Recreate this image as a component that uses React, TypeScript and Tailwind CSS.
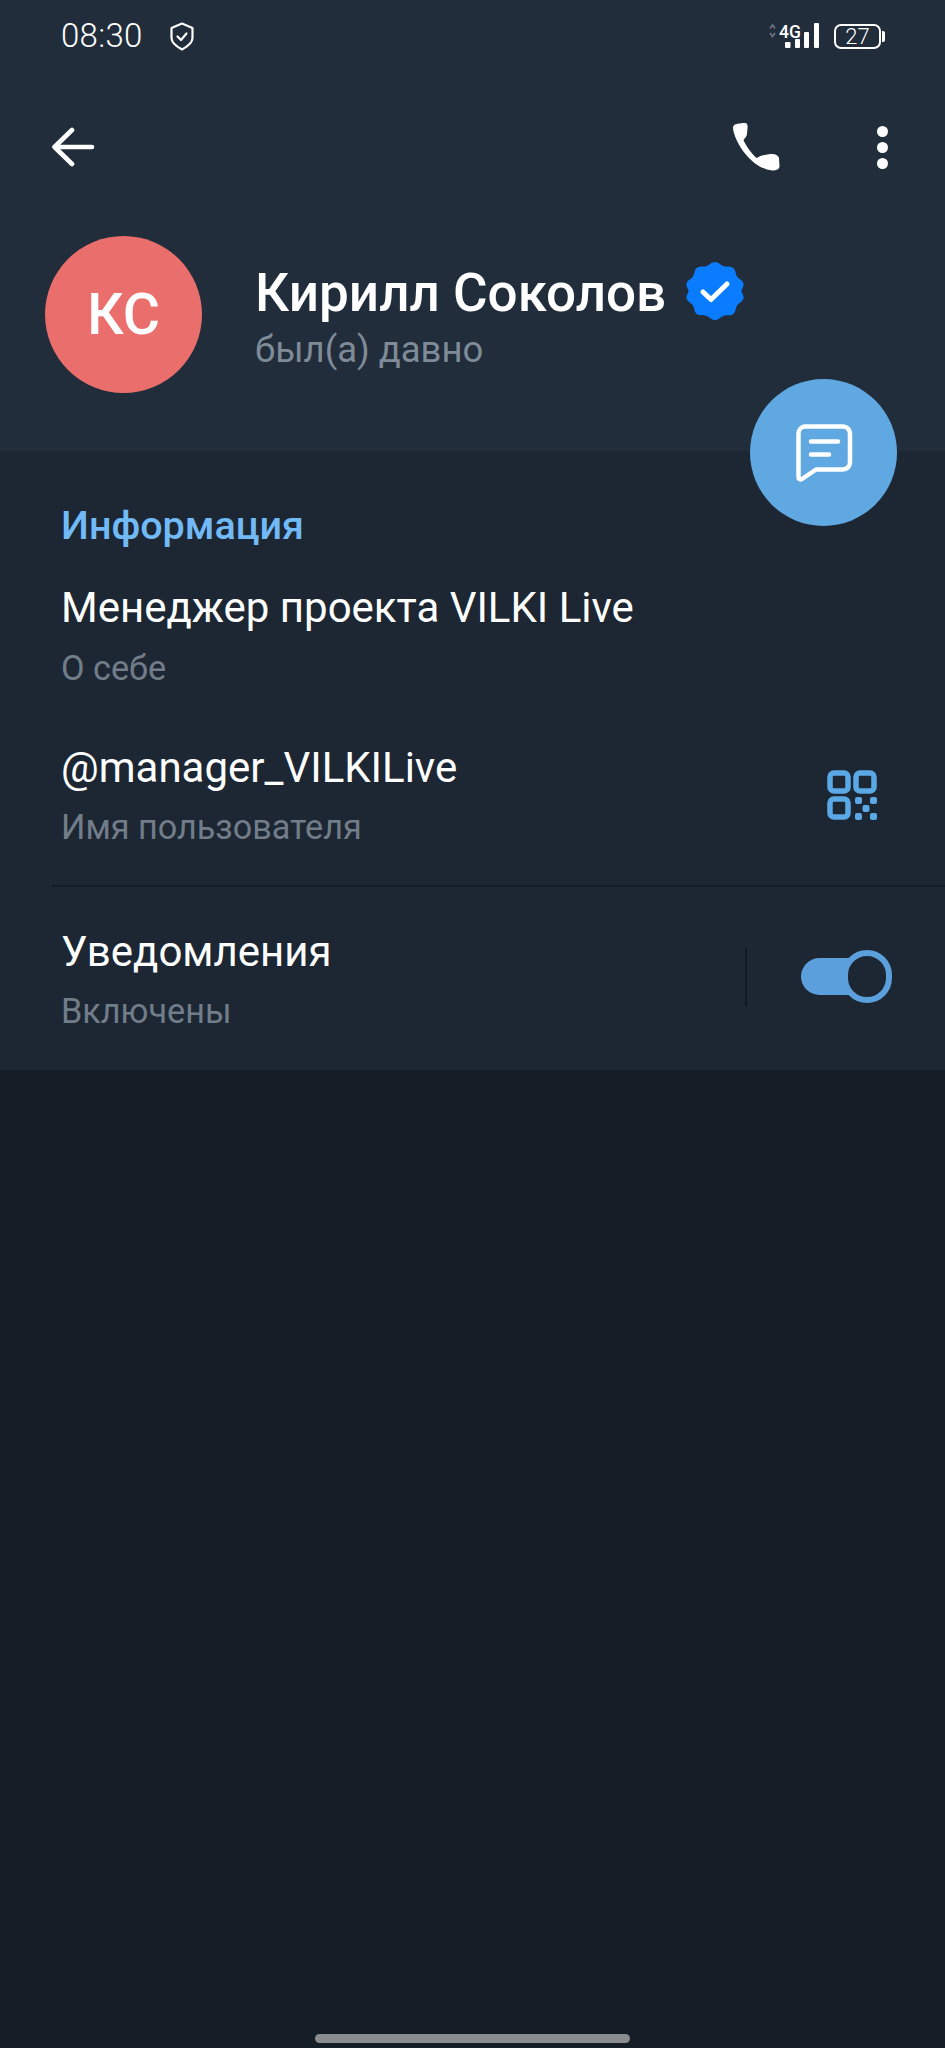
const sans = "font-['Roboto',sans-serif]";

function StatusBar() {
  return (
    <div className="h-[57px] pl-[61px] pr-[60px] pt-[19px] flex items-start justify-between">
      <div className="flex items-center h-[34px]">
        <span className="text-[33px] leading-[34px] font-light text-white tracking-[0.3px]">08:30</span>
        <svg className="ml-[26px]" width="26" height="29" viewBox="0 0 26 29" fill="none" stroke="#fff" strokeWidth="2.2" strokeLinejoin="round" strokeLinecap="round">
          <path d="M13 1.500 23.500 6V16c0 5-4 8-10.500 11.500C6.500 24 2.500 21 2.500 16V6Z" />
          <path d="M8.500 14.500 12 18l5.500-6.500" />
        </svg>
      </div>
      <div className="flex items-start mt-[3px]">
        <svg width="52" height="27" viewBox="0 0 52 27" fill="none">
          <path d="M2 6.500 4.500 3 7 6.500M2 11 4.500 14.500 7 11" stroke="#6b7580" strokeWidth="1.600" />
          <text x="11" y="15.500" fill="#fff" fontSize="17.500" fontWeight="500" fontFamily="Roboto, sans-serif">4G</text>
          <rect x="17" y="20" width="5.500" height="6" rx="1" fill="#fff" />
          <rect x="27" y="17" width="5" height="9" rx="1" fill="#fff" />
          <rect x="36" y="10" width="5" height="16" rx="1" fill="#fff" />
          <rect x="46" y="1" width="5" height="25" rx="1" fill="#fff" />
        </svg>
        <div className="ml-[14px] mt-[2px] flex items-center">
          <div className="w-[47px] h-[25px] border-2 border-white rounded-[7px] flex items-center justify-center text-[22px] leading-none font-light text-white">27</div>
          <div className="w-[3px] h-[11px] ml-[1px] bg-white rounded-r-[2px]" />
        </div>
      </div>
    </div>
  );
}

function Toolbar() {
  return (
    <div className="h-[180px] pl-[51px] pr-[57px] flex items-center justify-between">
      <svg width="44" height="40" viewBox="0 0 44 40" fill="none" stroke="#fff" strokeWidth="4.600" strokeLinecap="round" strokeLinejoin="round">
        <path d="M41 20H4M21 3 3.500 20 21 37" />
      </svg>
      <div className="flex items-center">
        <svg width="48" height="50" viewBox="0 0 48 50" fill="#fff">
          <path d="M3 2.500C6 1.500 10 1 13 1c2 0 2.700 2 2.600 4L15 12c-.2 3-2.500 4.500-3.500 6 1.500 4 7.500 13 13 18 1.500-.5 3.500-2 5.500-2.500l8-1.500c4-.5 8.500 1 9 4l.5 8c0 3-2.500 4.500-7.500 4.500C28 47.500 16 37 9 26 4 18 1 10 1 5.500 1 4 2 3 3 2.500Z" />
        </svg>
        <div className="ml-[97px] flex flex-col gap-[5px] w-[11px]">
          <div className="w-[11px] h-[11px] rounded-full bg-white" />
          <div className="w-[11px] h-[11px] rounded-full bg-white" />
          <div className="w-[11px] h-[11px] rounded-full bg-white" />
        </div>
      </div>
    </div>
  );
}

function Badge() {
  return (
    <svg width="58" height="58" viewBox="0 0 58 58" className="ml-[20px] mt-[-1px]">
      <path
        fill="#0a7cff"
        d="M29 0c3.600 0 5.800 3.400 8.700 4.300 3 .9 6.800-.5 9.500 1.700 2.600 2.100 2.200 6 3.900 8.600 1.700 2.600 5.500 3.700 6.300 6.900.8 3.100-1.900 5.100-1.900 7.500s2.700 4.400 1.900 7.500c-.8 3.200-4.600 4.300-6.300 6.900-1.700 2.600-1.300 6.500-3.900 8.600-2.700 2.200-6.500.8-9.500 1.700C34.800 54.600 32.600 58 29 58s-5.800-3.400-8.700-4.300c-3-.9-6.800.5-9.500-1.700-2.600-2.100-2.200-6-3.900-8.600C5.200 40.800 1.400 39.700.6 36.500-.2 33.400 2.500 31.400 2.500 29S-.2 24.600.6 21.500c.8-3.200 4.600-4.300 6.300-6.900 1.700-2.600 1.300-6.500 3.900-8.600 2.700-2.200 6.500-.8 9.500-1.700C23.200 3.400 25.400 0 29 0Z"
      />
      <path d="M17 30l8 7.500L41 22" fill="none" stroke="#fff" strokeWidth="5" strokeLinecap="round" strokeLinejoin="round" />
    </svg>
  );
}

function Row({ title, sub, right, gap }: { title: string; sub: string; right?: React.ReactNode; gap: string }) {
  return (
    <div className="pl-[61px] flex items-center justify-between">
      <div>
        <div className="text-[42px] leading-[50px] text-white">{title}</div>
        <div className={`text-[34.200px] leading-[40px] ${gap} text-[#717d89]`}>{sub}</div>
      </div>
      {right}
    </div>
  );
}

export default function App() {
  return (
    <div className={`relative w-[945px] min-h-[2048px] bg-[#151e27] flex flex-col ${sans}`}>
      <header className="h-[451px] bg-[#212d3b]">
        <StatusBar />
        <Toolbar />
        <div className="pl-[45px] flex items-start">
          <div className="mt-[-1px] w-[157px] h-[157px] rounded-full bg-[#ea6f6c] flex items-center justify-center text-white text-[57px] font-medium leading-none">КС</div>
          <div className="ml-[53px]">
            <div className="flex items-start mt-[26px]">
              <span className="text-[53px] leading-[60px] font-medium text-white">Кирилл Соколов</span>
              <Badge />
            </div>
            <div className="text-[36.500px] leading-[42px] mt-[6px] text-[#7f8b97]">был(а) давно</div>
          </div>
        </div>
      </header>

      <section className="h-[619px] bg-[#1d2733] pt-[53px]">
        <div className="pl-[61px] text-[39.500px] leading-[44px] font-medium text-[#71baf7]">Информация</div>
        <div className="mt-[35px]">
          <Row title="Менеджер проекта VILKI Live" sub="О себе" gap="mt-[15px]" />
        </div>
        <div className="mt-[55px]">
          <Row
            title="@manager_VILKILive"
            sub="Имя пользователя"
            gap="mt-[14px]"
            right={
              <svg width="50" height="50" viewBox="0 0 50 50" className="mr-[68px] mt-[-1px]" fill="none">
                <rect x="3" y="3" width="18" height="18" rx="4" stroke="#5ba8e6" strokeWidth="5.500" />
                <rect x="29" y="3" width="18" height="18" rx="4" stroke="#5ba8e6" strokeWidth="5.500" />
                <rect x="3" y="29" width="18" height="18" rx="4" stroke="#5ba8e6" strokeWidth="5.500" />
                <rect x="28" y="27" width="7" height="7" rx="2" fill="#5ba8e6" />
                <rect x="43" y="27" width="7" height="7" rx="2" fill="#5ba8e6" />
                <rect x="35.500" y="35" width="7" height="7" rx="2" fill="#5ba8e6" />
                <rect x="28" y="43" width="7" height="7" rx="2" fill="#5ba8e6" />
                <rect x="43" y="43" width="7" height="7" rx="2" fill="#5ba8e6" />
              </svg>
            }
          />
        </div>
        <div className="ml-[52px] mt-[38px] h-[2px] bg-[#141b24]" />
        <div className="mt-[40px]">
          <Row
            title="Уведомления"
            sub="Включены"
            gap="mt-[14px]"
            right={
              <div className="flex items-center mr-[74px] mt-[-5px]">
                <div className="w-[2px] h-[58px] bg-[#111821]" />
                <div className="relative ml-[54px] w-[70px] h-[37px] rounded-full bg-[#5ba0dc]">
                  <div className="absolute left-[41px] top-[-8px] w-[50px] h-[53px] rounded-full border-[6px] border-[#5ba0dc] bg-[#1d2733]" />
                </div>
              </div>
            }
          />
        </div>
      </section>

      <button className="absolute left-[750px] top-[379px] w-[147px] h-[147px] rounded-full bg-[#60a8e2] flex items-center justify-center">
        <svg width="58" height="58" viewBox="0 0 58 58" fill="none" stroke="#fff" strokeWidth="4.500" strokeLinecap="round" strokeLinejoin="round">
          <path d="M10 2.500h38a7 7 0 0 1 7 7v29a7 7 0 0 1-7 7H21L7 55c-1.500 1-3.500.5-3.500-2V9.500a7 7 0 0 1 6.500-7Z" />
          <path d="M16 17.500h27M16 30.500h18" />
        </svg>
      </button>

      <div className="absolute left-[315px] top-[2034px] w-[315px] h-[9px] rounded-full bg-[#8a8d90]" />
    </div>
  );
}
